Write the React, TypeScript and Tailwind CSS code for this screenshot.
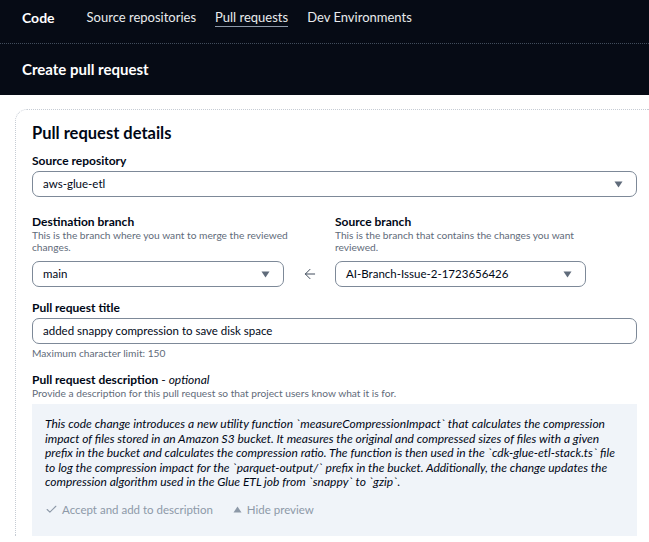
import { ArrowLeft, Check } from "lucide-react"

const font = { fontFamily: "Lato, 'Open Sans', sans-serif" }

function Caret({ up = false }: { up?: boolean }) {
  return (
    <svg width="9" height="7" viewBox="0 0 9 7" className={up ? "rotate-180" : ""}>
      <path d="M0.5 0.5 H8.5 L4.5 6.5 Z" fill="currentColor" />
    </svg>
  )
}

function Select({ value, className }: { value: string; className?: string }) {
  return (
    <div
      className={`flex h-[26px] items-center justify-between rounded-[7px] border border-[#7d8998] pl-[10px] pr-[13px] text-[11.5px] text-[#000716] ${className ?? ""}`}
    >
      <span>{value}</span>
      <span className="text-[#5f6b7a]">
        <Caret />
      </span>
    </div>
  )
}

function Label({ children }: { children: React.ReactNode }) {
  return <div className="text-[12px] font-bold leading-[15px] text-[#000716]">{children}</div>
}

function Hint({ children, className }: { children: React.ReactNode; className?: string }) {
  return <div className={`text-[10.2px] leading-[12px] text-[#5f6b7a] ${className ?? ""}`}>{children}</div>
}

export default function App() {
  return (
    <div style={font} className="h-[542px] w-[649px] overflow-hidden bg-white">
      <div className="bg-[#060b15]">
        <nav className="flex h-[35px] items-center px-[22px] text-[13px] text-[#e9ebed]">
          <span className="text-[14px] font-bold text-white">Code</span>
          <span className="ml-[32px]">Source repositories</span>
          <span className="ml-[19px] border-b border-[#8d99a8] leading-[18px]">Pull requests</span>
          <span className="ml-[19px]">Dev Environments</span>
        </nav>
        <div className="mt-[8px] border-t border-dotted border-[#414d5c]" />
        <div className="flex h-[51px] items-center px-[22px] text-[15px] font-bold text-white">
          Create pull request
        </div>
      </div>

      <div className="ml-[15px] mt-[14px] rounded-tl-[12px] border-l border-t border-dotted border-[#c6ccd4] pl-[16px] pr-[12px] pt-[12px]">
        <h2 className="text-[16.5px] font-bold leading-[22px] text-[#000716]">Pull request details</h2>

        <div className="mt-[9px]">
          <Label>Source repository</Label>
          <Select value="aws-glue-etl" className="mt-[3px]" />
        </div>

        <div className="mt-[17px] flex items-end">
          <div className="w-[252px]">
            <Label>Destination branch</Label>
            <Hint className="w-[270px]">This is the branch where you want to merge the reviewed changes.</Hint>
            <Select value="main" className="mt-[8px]" />
          </div>
          <div className="flex h-[26px] w-[51px] items-center justify-center text-[#414d5c]">
            <ArrowLeft size={16} strokeWidth={1.5} />
          </div>
          <div className="w-[251px]">
            <Label>Source branch</Label>
            <Hint>This is the branch that contains the changes you want reviewed.</Hint>
            <Select value="AI-Branch-Issue-2-1723656426" className="mt-[8px]" />
          </div>
        </div>

        <div className="mt-[13px]">
          <Label>Pull request title</Label>
          <div className="mt-[3px] flex h-[26px] items-center rounded-[7px] border border-[#7d8998] px-[10px] text-[11.5px] text-[#000716]">
            added snappy compression to save disk space
          </div>
          <Hint>
            <span className="mt-[3px] block">Maximum character limit: 150</span>
          </Hint>
        </div>

        <div className="mt-[13px]">
          <Label>
            Pull request description <span className="font-normal">-</span>{" "}
            <span className="font-normal italic">optional</span>
          </Label>
          <Hint>Provide a description for this pull request so that project users know what it is for.</Hint>
          <div className="mt-[5px] bg-[#f0f4f9] px-[13px] pb-[18px] pt-[13px]">
            <p className="text-[12px] italic leading-[14.5px] text-[#000716]">
              This code change introduces a new utility function `measureCompressionImpact` that calculates the
              compression impact of files stored in an Amazon S3 bucket. It measures the original and compressed sizes
              of files with a given prefix in the bucket and calculates the compression ratio. The function is then
              used in the `cdk-glue-etl-stack.ts` file to log the compression impact for the `parquet-output/` prefix
              in the bucket. Additionally, the change updates the compression algorithm used in the Glue ETL job from
              `snappy` to `gzip`.
            </p>
            <div className="mt-[12px] flex h-[16px] items-center text-[11.5px] text-[#8d99a8]">
              <Check size={13} strokeWidth={2} />
              <span className="ml-[4px]">Accept and add to description</span>
              <span className="ml-[20px]">
                <Caret up />
              </span>
              <span className="ml-[5px]">Hide preview</span>
            </div>
          </div>
        </div>
      </div>
    </div>
  )
}
